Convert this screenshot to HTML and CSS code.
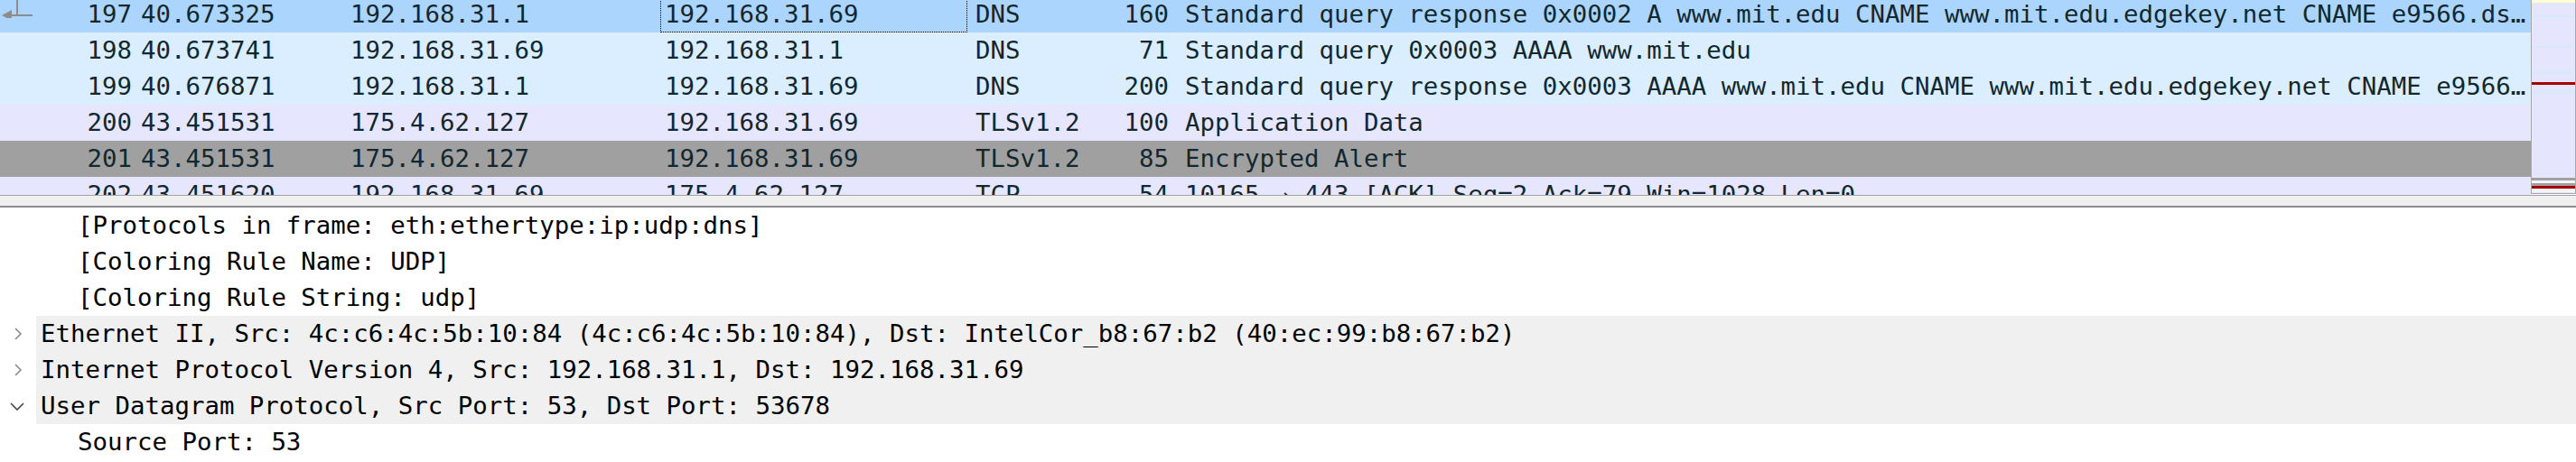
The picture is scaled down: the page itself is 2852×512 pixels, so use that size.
FILE: index.html
```html
<!DOCTYPE html>
<html>
<head>
<meta charset="utf-8">
<link rel="stylesheet" href="styles.css">
</head>
<body>
<div class="app">
  <div class="top">
    <div class="list">
      <div class="rows">
        <div class="row sel">
          <div class="c ind"><svg width="40" height="24" viewBox="0 0 40 24"><path d="M19 0 V21 M8 21 H36" stroke="#8c8c8c" stroke-width="2" fill="none"/><path d="M2 21 L13 15 L13 27 Z" fill="#8c8c8c"/></svg></div>
          <div class="c no">197</div><div class="c time">40.673325</div><div class="c src">192.168.31.1</div><div class="c dst focus">192.168.31.69</div><div class="c proto">DNS</div><div class="c len">160</div><div class="c info">Standard query response 0x0002 A www.mit.edu CNAME www.mit.edu.edgekey.net CNAME e9566.ds…</div>
        </div>
        <div class="row udp">
          <div class="c ind"></div>
          <div class="c no">198</div><div class="c time">40.673741</div><div class="c src">192.168.31.69</div><div class="c dst">192.168.31.1</div><div class="c proto">DNS</div><div class="c len">71</div><div class="c info">Standard query 0x0003 AAAA www.mit.edu</div>
        </div>
        <div class="row udp">
          <div class="c ind"></div>
          <div class="c no">199</div><div class="c time">40.676871</div><div class="c src">192.168.31.1</div><div class="c dst">192.168.31.69</div><div class="c proto">DNS</div><div class="c len">200</div><div class="c info">Standard query response 0x0003 AAAA www.mit.edu CNAME www.mit.edu.edgekey.net CNAME e9566…</div>
        </div>
        <div class="row tcp">
          <div class="c ind"></div>
          <div class="c no">200</div><div class="c time">43.451531</div><div class="c src">175.4.62.127</div><div class="c dst">192.168.31.69</div><div class="c proto">TLSv1.2</div><div class="c len">100</div><div class="c info">Application Data</div>
        </div>
        <div class="row gray">
          <div class="c ind"></div>
          <div class="c no">201</div><div class="c time">43.451531</div><div class="c src">175.4.62.127</div><div class="c dst">192.168.31.69</div><div class="c proto">TLSv1.2</div><div class="c len">85</div><div class="c info">Encrypted Alert</div>
        </div>
        <div class="row tcp">
          <div class="c ind"></div>
          <div class="c no">202</div><div class="c time">43.451620</div><div class="c src">192.168.31.69</div><div class="c dst">175.4.62.127</div><div class="c proto">TCP</div><div class="c len">54</div><div class="c info">10165 → 443 [ACK] Seq=2 Ack=79 Win=1028 Len=0</div>
        </div>
      </div>
    </div>
    <div class="minimap">
      <div class="mm yellow h3"></div>
      <div class="mm lav h14"></div>
      <div class="mm blue h2"></div>
      <div class="mm lav h32"></div>
      <div class="mm blue h2"></div>
      <div class="mm lav h26"></div>
      <div class="mm blue h3"></div>
      <div class="mm lav h9"></div>
      <div class="mm red h3"></div>
      <div class="mm lav h7"></div>
      <div class="mm blue h3"></div>
      <div class="mm lav h93"></div>
      <div class="mm grayb h3"></div>
      <div class="mm white h3"></div>
      <div class="mm grayb h3"></div>
      <div class="mm red h3"></div>
      <div class="mm white h4"></div>
    </div>
  </div>
  <div class="splitter"></div>
  <div class="detail">
    <div class="node"><div class="tog"></div><div class="lbl l1">[Protocols in frame: eth:ethertype:ip:udp:dns]</div></div>
    <div class="node"><div class="tog"></div><div class="lbl l1">[Coloring Rule Name: UDP]</div></div>
    <div class="node"><div class="tog"></div><div class="lbl l1">[Coloring Rule String: udp]</div></div>
    <div class="node"><div class="tog"><svg class="chev-r" width="10" height="14" viewBox="0 0 10 14"><path d="M2 1 L8 7 L2 13" stroke="#8a8a8a" stroke-width="1.6" fill="none"/></svg></div><div class="lbl l0 hl">Ethernet II, Src: 4c:c6:4c:5b:10:84 (4c:c6:4c:5b:10:84), Dst: IntelCor_b8:67:b2 (40:ec:99:b8:67:b2)</div></div>
    <div class="node"><div class="tog"><svg class="chev-r" width="10" height="14" viewBox="0 0 10 14"><path d="M2 1 L8 7 L2 13" stroke="#8a8a8a" stroke-width="1.6" fill="none"/></svg></div><div class="lbl l0 hl">Internet Protocol Version 4, Src: 192.168.31.1, Dst: 192.168.31.69</div></div>
    <div class="node"><div class="tog"><svg class="chev-d" width="16" height="10" viewBox="0 0 16 10"><path d="M1 2 L8 9 L15 2" stroke="#444" stroke-width="1.6" fill="none"/></svg></div><div class="lbl l0 hl">User Datagram Protocol, Src Port: 53, Dst Port: 53678</div></div>
    <div class="node"><div class="tog"></div><div class="lbl l1">Source Port: 53</div></div>
  </div>
</div>
</body>
</html>
```

FILE: styles.css
```css
html, body {
  margin: 0;
  padding: 0;
  background: #ffffff;
  overflow: hidden;
}

.app {
  width: 2852px;
  height: 512px;
  overflow: hidden;
  font-family: "DejaVu Sans Mono", "Liberation Mono", monospace;
  font-size: 27.4px;
  display: flex;
  flex-direction: column;
}

.top {
  height: 216px;
  display: flex;
  flex-shrink: 0;
}

.list {
  width: 2802px;
  height: 216px;
  overflow: hidden;
}

.rows {
  margin-top: -4px;
}

.row {
  display: grid;
  grid-template-columns: 80px 72px 232px 347px 340px 165px 64px 1502px;
  height: 40px;
  line-height: 40px;
  color: #12272e;
}

.row.sel { background: #abd5fd; }
.row.udp { background: #daeeff; }
.row.tcp { background: #e6e6fe; }
.row.gray { background: #a0a0a0; }

.c {
  white-space: nowrap;
  overflow: hidden;
}

.ind {
  display: flex;
  align-items: flex-start;
}

.ind svg {
  display: block;
}

.no { text-align: right; padding-right: 6px; }
.time { padding-left: 4px; }
.src { padding-left: 4px; }
.dst { padding-left: 5px; }
.proto { padding-left: 9px; }
.len { text-align: right; padding-right: 6px; }
.info { padding-left: 12px; }

.focus {
  outline: 1px dotted #000000;
  outline-offset: -1px;
}

.minimap {
  width: 48px;
  height: 214px;
  border-left: 1px solid #a9a9a9;
  border-right: 1px solid #a9a9a9;
  border-bottom: 1px solid #a9a9a9;
  display: flex;
  flex-direction: column;
  background: #e5e5fd;
}

.mm { flex-shrink: 0; }
.yellow { background: #ffffd2; }
.lav { background: #e5e5fd; }
.blue { background: #d7eafc; }
.red { background: #a40000; }
.grayb { background: #a0a0a0; }
.white { background: #f4f4fd; }
.h2 { height: 2px; }
.h3 { height: 3px; }
.h4 { height: 4px; }
.h7 { height: 7px; }
.h9 { height: 9px; }
.h14 { height: 14px; }
.h26 { height: 26px; }
.h32 { height: 32px; }
.h93 { height: 93px; }

.splitter {
  height: 11px;
  flex-shrink: 0;
  background: #f0f0f0;
  border-top: 1px solid #a3a3a3;
  border-bottom: 2px solid #8c8c94;
}

.detail {
  color: #000000;
}

.node {
  display: flex;
  height: 40px;
  line-height: 40px;
}

.tog {
  width: 40px;
  flex-shrink: 0;
  display: flex;
  align-items: center;
}

.chev-r { margin-left: 15px; }
.chev-d { margin-left: 11px; }

.lbl {
  flex: 1;
  white-space: nowrap;
}

.l0 { padding-left: 5px; }
.l1 { padding-left: 46px; }
.hl { background: #f0f0f0; }
```
